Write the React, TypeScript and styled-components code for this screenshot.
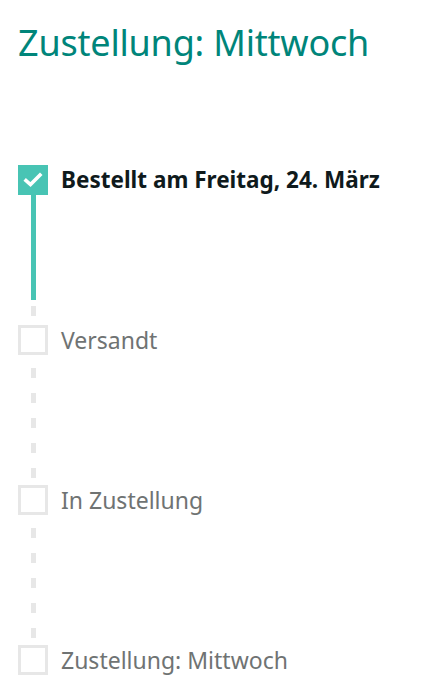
import React from 'react';
import styled, { createGlobalStyle } from 'styled-components';

const GlobalStyle = createGlobalStyle`
  body {
    margin: 0;
    background: #fff;
    font-family: "Noto Sans", "Open Sans", Arial, sans-serif;
  }
`;

const Page = styled.div`
  padding: 20px 18px 0 18px;
`;

const Title = styled.h1`
  margin: 0 0 99px 0;
  font-size: 36px;
  font-weight: 400;
  line-height: 46px;
  color: #00857a;
  letter-spacing: -0.2px;
`;

const Steps = styled.div`
  display: grid;
  grid-template-columns: 30px 1fr;
  column-gap: 13px;
`;

const Box = styled.div<{ done: boolean }>`
  width: 30px;
  height: 30px;
  box-sizing: border-box;
  display: flex;
  align-items: center;
  justify-content: center;
  background: ${({ done }) => (done ? '#48c4b4' : '#fff')};
  border: ${({ done }) => (done ? 'none' : '3px solid #e7e7e7')};
`;

const Label = styled.div<{ done: boolean }>`
  align-self: center;
  font-size: ${({ done }) => (done ? '22.5px' : '23px')};
  line-height: 30px;
  font-weight: ${({ done }) => (done ? 700 : 400)};
  color: ${({ done }) => (done ? '#0f1a1c' : '#6f7373')};
  white-space: nowrap;
`;

const Connector = styled.div<{ solid: number; offset: number }>`
  grid-column: 1;
  width: 5px;
  height: 130px;
  margin-left: 13px;
  background:
    linear-gradient(#48c4b4, #48c4b4) top / 5px ${({ solid }) => solid}px no-repeat,
    repeating-linear-gradient(
      to bottom,
      #e7e7e7 0 10px,
      transparent 10px 25px
    ) 0 ${({ offset }) => offset}px / 5px 100% no-repeat;
`;

const Spacer = styled.div``;

const Check = () => (
  <svg width="30" height="30" viewBox="0 0 30 30">
    <path
      d="M8 15.5 L12.5 19.5 L22 10"
      fill="none"
      stroke="#fff"
      strokeWidth="3.6"
      strokeLinecap="square"
    />
  </svg>
);

const steps = [
  { label: 'Bestellt am Freitag, 24. März', done: true },
  { label: 'Versandt', done: false },
  { label: 'In Zustellung', done: false },
  { label: 'Zustellung: Mittwoch', done: false },
];

export default function App() {
  return (
    <Page>
      <GlobalStyle />
      <Title>Zustellung: Mittwoch</Title>
      <Steps>
        {steps.map((s, i) => (
          <React.Fragment key={s.label}>
            <Box done={s.done}>{s.done && <Check />}</Box>
            <Label done={s.done}>{s.label}</Label>
            {i < steps.length - 1 && (
              <>
                <Connector solid={s.done ? 105 : 0} offset={s.done ? 111 : 13} />
                <Spacer />
              </>
            )}
          </React.Fragment>
        ))}
      </Steps>
    </Page>
  );
}
